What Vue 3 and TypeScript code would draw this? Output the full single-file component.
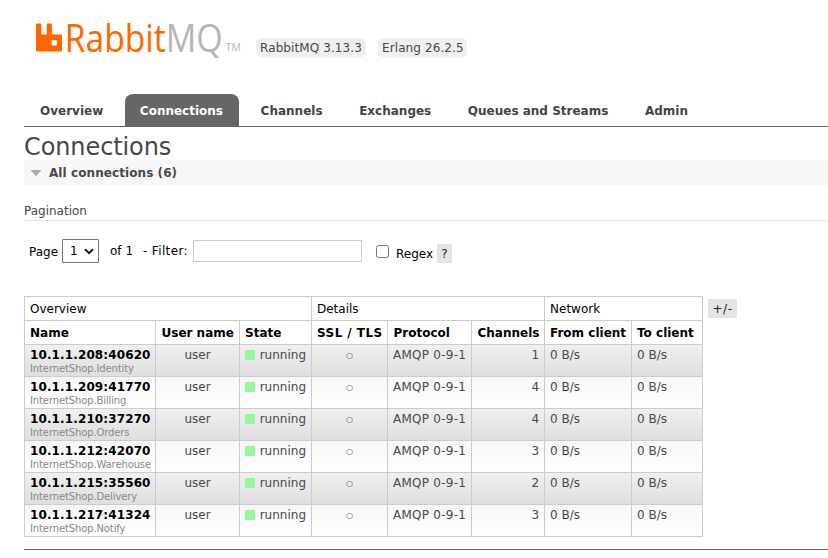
<script setup lang="ts">
import { ref } from 'vue'

interface Connection {
  address: string
  client: string
  channels: number
}

const tabs: string[] = ['Overview', 'Connections', 'Channels', 'Exchanges', 'Queues and Streams', 'Admin']
const activeTab = ref('Connections')
const filter = ref('')
const regex = ref(false)

const columns: string[] = ['Name', 'User name', 'State', 'SSL / TLS', 'Protocol', 'Channels', 'From client', 'To client']

const connections: Connection[] = [
  { address: '10.1.1.208:40620', client: 'InternetShop.Identity', channels: 1 },
  { address: '10.1.1.209:41770', client: 'InternetShop.Billing', channels: 4 },
  { address: '10.1.1.210:37270', client: 'InternetShop.Orders', channels: 4 },
  { address: '10.1.1.212:42070', client: 'InternetShop.Warehouse', channels: 3 },
  { address: '10.1.1.215:35560', client: 'InternetShop.Delivery', channels: 2 },
  { address: '10.1.1.217:41324', client: 'InternetShop.Notify', channels: 3 },
]
</script>

<template>
  <div class="page">
    <header class="header">
      <svg class="logo" width="208" height="60" viewBox="0 -12 208 60">
        <path
          fill="#ff6600"
          fill-rule="evenodd"
          d="M1 3.500h3.300q1 0 1 1v9q0 1 1 1h3.400q1 0 1-1v-9q0-1 1-1h3.200q1 0 1 1v9q0 1 1 1h8.100q1 0 1 1v15q0 1-1 1H1q-1 0-1-1V4.500q0-1 1-1zM16.500 20q-1 0-1 1v3.600q0 1 1 1h3.400q1 0 1-1V21q0-1-1-1z"
        />
        <text class="logo-rabbit" x="28.800" y="31.500" textLength="101" lengthAdjust="spacingAndGlyphs">Rabbit</text>
        <text class="logo-mq" x="129.800" y="31.500" textLength="57" lengthAdjust="spacingAndGlyphs">MQ</text>
        <text class="logo-tm" x="189.800" y="31.300" textLength="15" lengthAdjust="spacingAndGlyphs">TM</text>
      </svg>
      <span class="version rabbit">RabbitMQ 3.13.3</span>
      <span class="version erlang">Erlang 26.2.5</span>
    </header>

    <nav class="tabs">
      <a v-for="tab in tabs" :key="tab" class="tab" :class="{ active: tab === activeTab }" @click="activeTab = tab">{{ tab }}</a>
    </nav>

    <h1>Connections</h1>
    <h2>
      <svg class="arrow" width="12" height="7" viewBox="0 0 12 7"><path d="M.5 0h11L6 6.300z" fill="#aaa" /></svg>
      <span>All connections (6)</span>
    </h2>

    <h3>Pagination</h3>
    <div class="pager">
      <span class="page-label">Page</span>
      <button class="select">
        1
        <svg width="10" height="7" viewBox="0 0 10 7"><path d="M1 1.200l4 3.900 4-3.900" fill="none" stroke="#111" stroke-width="2" /></svg>
      </button>
      <span class="of">of 1</span>
      <span class="filter-label">- Filter:</span>
      <input v-model="filter" class="filter" type="text" />
      <input v-model="regex" class="check" type="checkbox" />
      <span class="regex">Regex</span>
      <span class="help">?</span>
    </div>

    <div class="listing">
      <table>
        <colgroup>
          <col class="c-name" /><col class="c-user" /><col class="c-state" /><col class="c-ssl" />
          <col class="c-protocol" /><col class="c-channels" /><col class="c-from" /><col class="c-to" />
        </colgroup>
        <thead>
          <tr>
            <th class="group" colspan="3">Overview</th>
            <th class="group" colspan="3">Details</th>
            <th class="group" colspan="2">Network</th>
          </tr>
          <tr>
            <th v-for="column in columns" :key="column">{{ column }}</th>
          </tr>
        </thead>
        <tbody>
          <tr v-for="connection in connections" :key="connection.address">
            <td><a class="address">{{ connection.address }}</a><sub>{{ connection.client }}</sub></td>
            <td class="center">user</td>
            <td><div class="state"><i></i>running</div></td>
            <td class="center ring">○</td>
            <td class="protocol">AMQP 0-9-1</td>
            <td class="right">{{ connection.channels }}</td>
            <td>0 B/s</td>
            <td>0 B/s</td>
          </tr>
        </tbody>
      </table>
      <span class="toggle">+/-</span>
    </div>
    <footer></footer>
  </div>
</template>

<style>
body {
  margin: 0;
  background: #fff;
}
</style>

<style scoped>
.page {
  box-sizing: border-box;
  height: 558px;
  padding: 8px 0 0 24px;
  overflow: hidden;
  color: #484848;
  font: 12px/16px Verdana, "DejaVu Sans", sans-serif;
}
.header {
  display: flex;
  height: 86px;
  align-items: flex-start;
}
.logo {
  margin-left: 12px;
}
.logo text {
  font-family: "Open Sans", sans-serif;
  font-size: 38.500px;
}
.logo .logo-rabbit {
  fill: #ff6600;
}
.logo .logo-mq {
  fill: #b6b6b6;
}
.logo .logo-tm {
  fill: #b6b6b6;
  font-size: 10px;
}
.version {
  box-sizing: border-box;
  width: 110px;
  height: 19px;
  margin: 30px 0 0 12px;
  padding: 2px 0 0 4px;
  border-radius: 5px;
  background: #efefef;
  letter-spacing: 0.1px;
  white-space: nowrap;
}
.erlang {
  width: 89px;
}
.tabs {
  display: flex;
  gap: 6.600px;
  height: 32px;
  padding-left: 1px;
  border-bottom: 1px solid #666;
}
.tab {
  padding: 9px 15px 7px;
  border-radius: 8px 8px 0 0;
  color: #444;
  font-weight: bold;
  white-space: nowrap;
  cursor: pointer;
}
.tab.active {
  padding-right: 16px;
  background: #666;
  color: #fff;
}
h1 {
  height: 33px;
  margin: 0;
  font-size: 24px;
  font-weight: normal;
  letter-spacing: -0.1px;
  line-height: 41px;
}
h2 {
  display: flex;
  box-sizing: border-box;
  height: 25px;
  align-items: center;
  gap: 7px;
  margin: 0;
  padding-left: 6px;
  background: #f7f7f7;
  font-size: 12px;
  letter-spacing: 0.08px;
}
.arrow {
  margin-top: 1px;
}
h3 {
  height: 17px;
  margin: 18px 0 0;
  border-bottom: 1px solid #e4e4e4;
  font-size: 12px;
  font-weight: normal;
}
.pager {
  display: flex;
  height: 75px;
  align-items: flex-start;
  color: #000;
  white-space: nowrap;
}
.page-label {
  width: 33px;
  margin: 23px 0 0 5px;
}
.select {
  display: flex;
  box-sizing: border-box;
  width: 37px;
  height: 24px;
  align-items: center;
  justify-content: space-between;
  margin-top: 18px;
  padding: 0 4px 0 7px;
  border: 1px solid #767676;
  border-radius: 1px;
  background: #fff;
  color: #000;
  font: inherit;
}
.of {
  width: 33px;
  margin: 22px 0 0 11px;
}
.filter-label {
  width: 50px;
  margin-top: 22px;
  letter-spacing: 0.35px;
}
.filter {
  box-sizing: border-box;
  width: 169px;
  height: 22px;
  margin: 19px 0 0;
  border: 1px solid #ccc;
}
.check {
  width: 13px;
  height: 13px;
  margin: 24px 7px 0 14px;
}
.regex {
  width: 41px;
  margin-top: 25px;
}
.help,
.toggle {
  box-sizing: border-box;
  height: 19px;
  padding-top: 2px;
  background: #e4e4e4;
  color: #222;
  text-align: center;
}
.help {
  width: 15px;
  margin-top: 23px;
}
.listing {
  display: flex;
  align-items: flex-start;
}
table {
  width: 679px;
  border-collapse: collapse;
  table-layout: fixed;
}
.c-name { width: 131px; }
.c-user { width: 84px; }
.c-state { width: 72px; }
.c-ssl { width: 76px; }
.c-protocol { width: 84px; }
.c-channels { width: 73px; }
.c-from { width: 87px; }
.c-to { width: 71px; }
th,
td {
  box-sizing: border-box;
  height: 24px;
  padding: 0 5px;
  border: 1px solid #ccc;
  text-align: left;
  white-space: nowrap;
}
th {
  color: #000;
}
thead tr:last-child th:nth-child(n + 2) {
  padding-left: 5.500px;
  padding-right: 0;
}
thead tr:last-child th:nth-child(3),
thead tr:last-child th:nth-child(4),
thead tr:last-child th:nth-child(n + 7) {
  padding-left: 5px;
}
thead tr:last-child th:nth-child(4) {
  letter-spacing: 0.45px;
}
th.group {
  font-weight: normal;
}
td {
  height: 32px;
  padding-top: 3px;
  line-height: 15px;
  vertical-align: top;
}
tbody tr {
  height: 32px;
  background: linear-gradient(#f7f7f7, #fff);
}
tbody tr:nth-child(odd) {
  background: linear-gradient(#f0f0f0, #dedede);
}
.address {
  display: block;
  color: #000;
  font-weight: bold;
  letter-spacing: 0.12px;
}
sub {
  display: block;
  color: #888;
  font-size: 10px;
  letter-spacing: -0.12px;
  line-height: 12px;
}
.center {
  text-align: center;
}
.ring {
  font-size: 8px;
}
.protocol {
  letter-spacing: 0.25px;
}
.right {
  text-align: right;
}
.state {
  display: flex;
  align-items: flex-start;
  gap: 5px;
}
.state i {
  width: 10px;
  height: 10px;
  margin-top: 2px;
  background: #98f898;
}
.toggle {
  width: 29px;
  margin: 3px 0 0 5px;
  letter-spacing: 0.5px;
}
footer {
  height: 1px;
  margin-top: 12px;
  background: #666;
}
</style>
